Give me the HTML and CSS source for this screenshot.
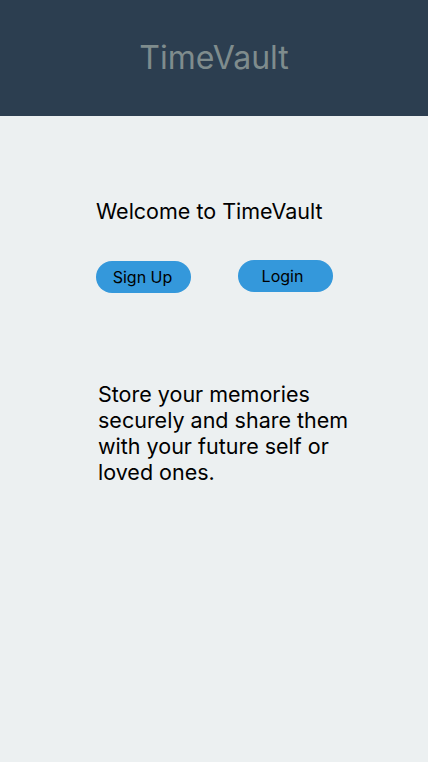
FILE: index.html
```html
<!DOCTYPE html>
<html>
<head>
<meta charset="utf-8">
<link rel="stylesheet" href="styles.css">
</head>
<body>
<header class="top">
  <h1 class="brand">TimeVault</h1>
</header>
<main class="content">
  <h2 class="welcome">Welcome to TimeVault</h2>
  <div class="actions">
    <button class="btn">Sign Up</button>
    <button class="btn btn-login">Login</button>
  </div>
  <p class="tagline">Store your memories securely and share them with your future self or loved ones.</p>
</main>
</body>
</html>
```
FILE: styles.css
```css
html, body {
  margin: 0;
  padding: 0;
}
body {
  background: #ecf0f1;
  font-family: Inter, "Noto Sans", sans-serif;
  color: #000;
  width: 428px;
  height: 762px;
  overflow: hidden;
}
.top {
  background: #2c3e50;
  height: 116px;
  display: flex;
  align-items: center;
  justify-content: center;
}
.brand {
  margin: 0;
  font-size: 32px;
  font-weight: 400;
  color: #7f8c8d;
  line-height: 1;
}
.content {
  padding: 82px 0 0 96px;
  display: flex;
  flex-direction: column;
  align-items: flex-start;
}
.welcome {
  margin: 0;
  font-size: 21.5px;
  font-weight: 400;
  line-height: 26px;
}
.actions {
  display: flex;
  gap: 47px;
  margin-top: 37px;
}
.btn {
  width: 95px;
  height: 32px;
  border: none;
  border-radius: 16px;
  background: #3498db;
  font-family: Inter, "Noto Sans", sans-serif;
  font-size: 16px;
  color: #000;
  padding: 0 2px 0 0;
}
.btn-login {
  position: relative;
  top: -1px;
  padding: 0 6px 0 0;
}
.tagline {
  margin: 88px 0 0 2px;
  width: 262px;
  font-size: 21.5px;
  line-height: 26px;
}
```
